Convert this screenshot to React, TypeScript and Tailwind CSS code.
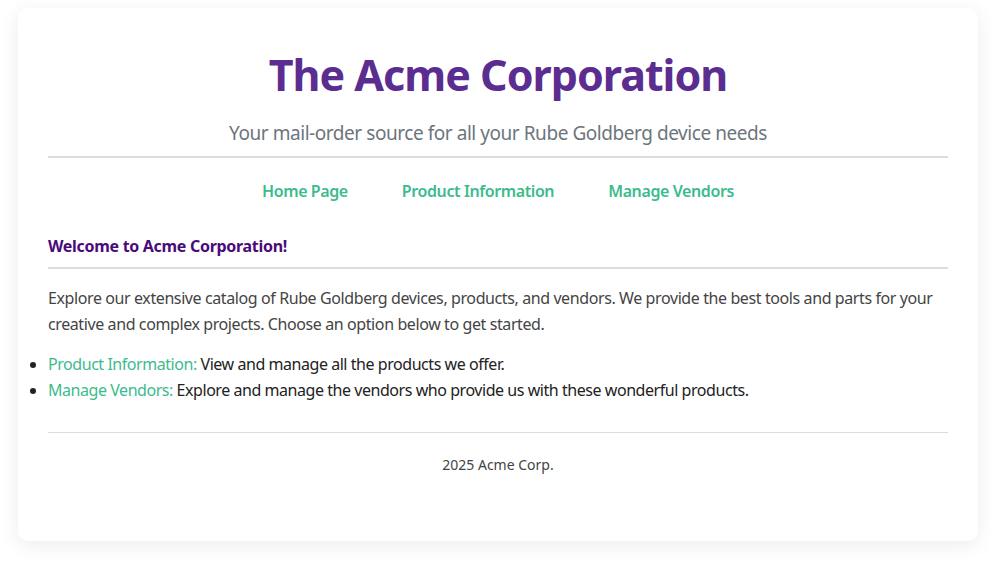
export default function App() {
  return (
    <div className="min-h-screen bg-white pt-2 font-['Segoe_UI','Noto_Sans',sans-serif]">
      <div className="ml-[18px] w-[960px] rounded-[10px] bg-white px-[30px] pt-[37px] pb-[66px] shadow-[0_4px_20px_rgba(0,0,0,0.08)]">
        {/* Header */}
        <header className="text-center">
          <h1 className="text-[43px] font-bold leading-[60px] tracking-[-1px] text-[#5c2d91]">The Acme Corporation</h1>
          <p className="mt-[15px] text-[19px] leading-[26px] tracking-[-0.45px] text-[#6c757d]">
            Your mail-order source for all your Rube Goldberg device needs
          </p>
        </header>
        <div className="mt-[10px] h-[2px] bg-[#dddddd]" />

        {/* Nav */}
        <nav className="flex justify-center gap-[54px] pt-[21px] pb-[32px] text-[16px] leading-[24px] tracking-[-0.4px]">
          <a className="font-semibold text-[#3cbb8e]" href="#">Home Page</a>
          <a className="font-semibold text-[#3cbb8e]" href="#">Product Information</a>
          <a className="font-semibold text-[#3cbb8e]" href="#">Manage Vendors</a>
        </nav>

        {/* Main */}
        <main>
          <h2 className="pb-[10px] text-[16px] font-bold leading-[22px] tracking-[-0.3px] text-[#4b0a7a]">Welcome to Acme Corporation!</h2>
          <div className="h-[2px] bg-[#dddddd]" />
          <p className="mt-[16px] text-[16px] leading-[26px] tracking-[-0.4px] text-[#444444]">
            Explore our extensive catalog of Rube Goldberg devices, products, and vendors. We provide the best tools and parts for your creative and complex projects. Choose an option below to get started.
          </p>
          <ul className="mt-[14px] list-outside list-disc text-[16px] leading-[26px] tracking-[-0.45px] text-[#222222]">
            <li>
              <a className="text-[#3cbb8e]" href="#">Product Information:</a> View and manage all the products we offer.
            </li>
            <li>
              <a className="text-[#3cbb8e]" href="#">Manage Vendors:</a> Explore and manage the vendors who provide us with these wonderful products.
            </li>
          </ul>
        </main>

        {/* Footer */}
        <footer className="mt-[29px] border-t border-[#dddddd] pt-[22px] text-center text-[14px] leading-[20px] text-[#444444]">
          2025 Acme Corp.
        </footer>
      </div>
    </div>
  );
}
